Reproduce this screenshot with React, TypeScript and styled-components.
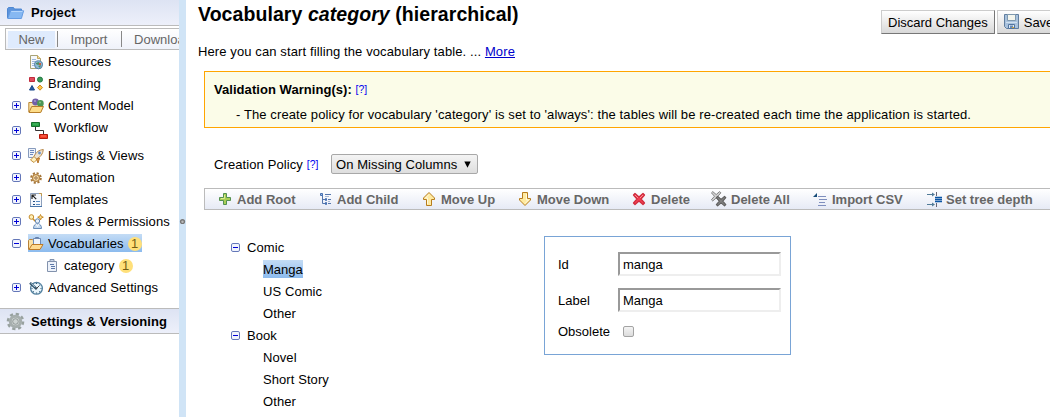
import React from "react";
import styled, { createGlobalStyle } from "styled-components";

const GlobalStyle = createGlobalStyle`
  * { box-sizing: border-box; }
  html, body { margin: 0; height: 100%; overflow: hidden; background: #fff; }
  body { font: 13px "Liberation Sans", Arial, sans-serif; color: #000; }
`;

const Page = styled.div`
  display: flex;
  width: 1050px;
  height: 417px;
  overflow: hidden;
  white-space: nowrap;
`;

/* ---------- sidebar ---------- */
const Sidebar = styled.aside`
  flex: 0 0 179px;
  overflow: hidden;
`;
const StackHeader = styled.div<{ $first?: boolean }>`
  display: flex;
  align-items: center;
  gap: 6px;
  height: 26px;
  padding: 0 0 0 6px;
  font-weight: bold;
  letter-spacing: 0.08px;
  border-top: ${(p) => (p.$first ? "0" : "1px solid #bbb")};
  border-bottom: 1px solid #bbb;
  background: linear-gradient(#dde3f3, #edf0fa);
`;
const Tabs = styled.div`
  display: flex;
  align-items: center;
  width: 220px;
  height: 22px;
  margin: 2px 0 0 5px;
  padding-left: 2px;
  border: 1px solid #bbb;
  color: #666;
  background: linear-gradient(#fff, #eff2fa);
`;
const Tab = styled.span<{ $active?: boolean; $width: number }>`
  flex: 0 0 ${(p) => p.$width}px;
  height: 17px;
  line-height: 17px;
  text-align: center;
  background: ${(p) => (p.$active ? "#dfebfd" : "transparent")};
`;
const TabRule = styled.i`
  width: 1px;
  height: 16px;
  margin: 0 1px 0 2px;
  background: #888;
`;
const Nav = styled.div`
  padding-top: 1px;
  height: 258px;
`;
const NavRow = styled.div<{ $tall?: boolean; $indent?: boolean }>`
  display: flex;
  align-items: ${(p) => (p.$tall ? "flex-start" : "center")};
  height: ${(p) => (p.$tall ? 28 : 22)}px;
  padding-left: ${(p) => (p.$indent ? 28 : 12)}px;
`;
const ToggleSlot = styled.span<{ $top?: number }>`
  flex: 0 0 16px;
  height: 9px;
  margin-top: ${(p) => p.$top ?? 0}px;
  margin-bottom: 1px;
  line-height: 0;
`;
const NavItem = styled.span<{ $selected?: boolean; $tall?: boolean }>`
  display: flex;
  align-items: ${(p) => (p.$tall ? "flex-start" : "center")};
  gap: ${(p) => (p.$tall ? 3 : 4)}px;
  height: ${(p) => (p.$tall ? 28 : 18)}px;
  margin-bottom: ${(p) => (p.$tall ? 0 : 2)}px;
  padding-top: ${(p) => (p.$tall ? 0 : 2)}px;
  background: ${(p) => (p.$selected ? "linear-gradient(#c4dcf5, #8cbbee)" : "none")};
`;
const NavText = styled.span<{ $tall?: boolean }>`
  line-height: ${(p) => (p.$tall ? 21 : 18)}px;
  letter-spacing: 0.1px;
`;
const Badge = styled.span`
  width: 14px;
  height: 14px;
  border-radius: 7px;
  line-height: 14px;
  text-align: center;
  color: #755d14;
  background: #ffe07a;
`;
const Splitter = styled.div`
  display: flex;
  align-items: center;
  flex: 0 0 7px;
  background: #d0e4f6;
  svg { margin-top: 26px; }
`;

/* ---------- main area ---------- */
const Main = styled.main`
  flex: 1;
  min-width: 0;
  overflow: hidden;
`;
const Heading = styled.div`
  display: flex;
  justify-content: space-between;
  height: 41px;
  padding-left: 12px;
`;
const Title = styled.h1`
  margin: 0;
  font-size: 19.5px;
  line-height: 29px;
  letter-spacing: 0.07px;
`;
const Actions = styled.div`
  display: flex;
  gap: 2px;
  flex: 0 0 169px;
  min-width: 0;
  padding-top: 10px;
`;
const Button = styled.button`
  display: flex;
  flex: none;
  align-items: center;
  gap: 4px;
  height: 24px;
  padding: 0 6px;
  border: 1px solid;
  border-color: #ccc #777 #777 #ccc;
  font: 13px "Liberation Sans", Arial, sans-serif;
  color: #000;
  background: linear-gradient(#fff, #d8d8d8);
`;
const Intro = styled.p`
  height: 30px;
  margin: 0;
  padding-left: 12px;
  line-height: 21px;
  letter-spacing: 0.11px;
`;
const More = styled.a`
  color: #0000cc;
  text-decoration: underline;
`;
const Warning = styled.section`
  width: 900px;
  height: 57px;
  margin-left: 18px;
  padding: 9px 9px 0;
  border: 1px solid #ffa500;
  background: #fbfce8;
`;
const WarningTitle = styled.div`
  font-weight: bold;
  line-height: 17px;
  letter-spacing: 0.05px;
`;
const WarningText = styled.div`
  padding: 8px 0 0 22px;
  line-height: 17px;
  letter-spacing: 0.108px;
`;
const Help = styled.sup`
  font-size: 10.4px;
  font-weight: normal;
  line-height: 0;
  vertical-align: 1px;
  color: #0000ee;
`;
const Policy = styled.div`
  display: flex;
  align-items: center;
  height: 60px;
  padding: 12px 0 0 28px;
`;
const PolicyLabel = styled.span`
  width: 117px;
  letter-spacing: 0.1px;
`;
const Select = styled.div`
  display: flex;
  align-items: center;
  justify-content: space-between;
  width: 147px;
  height: 20px;
  padding: 0 6px 0 4px;
  border: 1px solid #a8a8a8;
  border-radius: 2px;
  letter-spacing: 0.08px;
  background: linear-gradient(#f4f4f4, #dedede);
`;
const Toolbar = styled.div`
  display: flex;
  align-items: center;
  width: 900px;
  height: 22px;
  margin-left: 18px;
  padding-left: 12px;
  border: 1px solid #bbb;
  background: linear-gradient(#fff, #e6eaf5);
`;
const Tool = styled.span<{ $width: number }>`
  display: flex;
  flex: 0 0 ${(p) => p.$width}px;
  align-items: center;
  gap: 4px;
  font-weight: bold;
  color: #666;
`;
const Workspace = styled.div`
  display: flex;
  padding: 26px 0 0 45px;
`;
const Tree = styled.div`
  width: 313px;
  padding-top: 1px;
`;
const TreeRow = styled.div<{ $leaf?: boolean }>`
  display: flex;
  align-items: center;
  gap: 7px;
  height: 22px;
  padding-left: ${(p) => (p.$leaf ? 32 : 0)}px;
  svg { margin-bottom: 1px; }
`;
const TreeText = styled.span<{ $selected?: boolean }>`
  height: 18px;
  margin-bottom: 2px;
  line-height: 20px;
  letter-spacing: ${(p) => (p.$selected ? 0 : 0.08)}px;
  background: ${(p) => (p.$selected ? "linear-gradient(#c4dcf5, #8cbbee)" : "none")};
`;
const Form = styled.div`
  width: 247px;
  height: 119px;
  padding: 15px 9px 0 13px;
  border: 1px solid #79a4d6;
`;
const Field = styled.label<{ $last?: boolean }>`
  display: flex;
  align-items: center;
  height: ${(p) => (p.$last ? 15 : 24)}px;
  margin-bottom: 12px;
`;
const FieldName = styled.span`
  flex: 0 0 60px;
`;
const Input = styled.input`
  width: 163px;
  height: 24px;
  padding: 1px 3px;
  border: 2px solid;
  border-color: #999 #eee #eee #999;
  outline: 0;
  font: 13px "Liberation Sans", Arial, sans-serif;
  background: #fff;
`;
const Checkbox = styled.span`
  width: 11px;
  height: 11px;
  margin-left: 5px;
  border: 1px solid #a3a3a3;
  border-radius: 2px;
  background: linear-gradient(#f4f4f4, #dcdcdc);
`;

/* ---------- icons ---------- */
const Icon = styled.svg`
  flex: none;
  fill: none;
`;
const Svg = ({ w = 16, h = 16, children }: { w?: number; h?: number; children: React.ReactNode }) => (
  <Icon width={w} height={h} viewBox={`0 0 ${w} ${h}`}>
    {children}
  </Icon>
);

const Toggle = ({ open }: { open?: boolean }) => (
  <Svg w={9} h={9}>
    <rect x=".5" y=".5" width="8" height="8" rx="1.4" fill="#f1f4fd" stroke="#6477b8" />
    <path d={open ? "M2 4.5h5" : "M2 4.5h5M4.5 2v5"} stroke="#0000d8" />
  </Svg>
);

const ProjectIcon = () => (
  <Svg w={19} h={16}>
    <path d="M1.5 13V3.5l1-1h5l1 1.5h7v3" fill="#5b93dc" stroke="#4f88d2" />
    <path d="M1.7 13.5 4.6 5.8h13l-2.2 7.7z" fill="#86b8f2" stroke="#659ce2" />
    <path d="M5.2 6.5h11.4" stroke="#b5d6fb" />
  </Svg>
);
const GearIcon = () => (
  <Svg w={19} h={19}>
    <circle cx="9.5" cy="9.5" r="7.5" stroke="#98a19f" strokeWidth="2.6" strokeDasharray="3.2 2.69" />
    <circle cx="9.5" cy="9.5" r="5.2" fill="#d5dad9" stroke="#a6aead" strokeWidth="3" />
    <circle cx="9.5" cy="9.5" r="2.8" fill="#cdd3d2" stroke="#8f9796" />
  </Svg>
);
const ResourcesIcon = () => (
  <Svg>
    <path d="M2.5 1.5h7l3 3v10h-10z" fill="#f5f8fc" stroke="#a8a377" />
    <path d="M9.5 1.5v3h3" fill="#f6dfa0" stroke="#c4a65c" />
    <path d="M4 5.5h4M4 7.5h4M4 9.5h2M4 11.5h2" stroke="#9db9dc" />
    <circle cx="10.5" cy="10.8" r="4" fill="#8ebbd7" stroke="#547ea5" />
    <path d="m8 9 3-1 1 2-2 1-2-1zM10 12l3-1-1 3z" fill="#4f8c62" />
    <path d="M11 9h2v2h-2z" fill="#c65d48" />
  </Svg>
);
const BrandingIcon = () => (
  <Svg>
    <path d="M1.5 1.5h5v4h-5z" fill="#e04c5c" stroke="#c02a3c" />
    <circle cx="12" cy="3.6" r="2.5" fill="#3b9b5a" stroke="#237943" />
    <path d="M4 9.5 6.5 14h-5z" fill="#235aa3" stroke="#17468a" />
    <path d="m12 9 2.5 2.6L12 14.2l-2.5-2.6z" fill="#ffc84a" stroke="#cf8a20" />
  </Svg>
);
const ContentIcon = () => (
  <Svg>
    <path d="M.8 14V4.5h4l1 1.5h7v8" fill="#fbe5a8" stroke="#b98534" />
    <circle cx="7.5" cy="4" r="3.4" fill="#7060a8" />
    <circle cx="12.4" cy="5.4" r="3.3" fill="#4c9654" />
    <circle cx="7" cy="3" r="1" fill="#a79bd0" />
    <circle cx="12" cy="4.5" r="1" fill="#87c18a" />
    <path d="m1 14.5 2.7-6h11.8l-2.8 6z" fill="#fddc88" stroke="#b77e2b" />
  </Svg>
);
const WorkflowIcon = () => (
  <Svg w={23} h={26}>
    <path d="M7.5 10v3.5h8V17" stroke="#333" />
    <path d="M3.5 5.5h8v4h-8z" fill="#27a347" stroke="#176e2c" />
    <path d="M11.5 17.5h8v4h-8z" fill="#f03c24" stroke="#b51a0d" />
    <path d="M5 7h5" stroke="#4fb966" />
    <path d="M13 19h5" stroke="#ff6f5c" />
  </Svg>
);
const ListingsIcon = () => (
  <Svg>
    <path d="M.5.5h7v9h-7z" fill="#eef3fb" stroke="#879bbd" />
    <path d="M2 2.5h4M2 4.5h4M2 6.5h3" stroke="#6d89bd" />
    <path d="m2.5 12 4-4 3 3-3.5 3.5z" fill="#fff3c1" stroke="#c69242" />
    <path d="M6 8.5C8 4 11 2 15.3 1.5 15 6 12.5 9 8.5 11z" fill="#ebe2d2" stroke="#b98a4b" />
    <circle cx="11.5" cy="5" r="1.4" fill="#6a91c7" />
    <path d="m8.5 11 3-1-1.5 5z" fill="#e8a24c" stroke="#b7762c" />
  </Svg>
);
const AutomationIcon = () => (
  <Svg>
    <circle cx="8" cy="8" r="4.8" stroke="#a57639" strokeWidth="2" strokeDasharray="2.1 1.67" />
    <circle cx="8" cy="8" r="3.4" fill="#f8dfab" stroke="#b58648" strokeWidth="1.3" />
    <circle cx="8" cy="8" r="1.2" fill="#fff" stroke="#8f5e29" />
  </Svg>
);
const TemplatesIcon = () => (
  <Svg>
    <path d="M2.5 1.5h11v13h-11z" fill="#f5f8fd" stroke="#8da0bc" />
    <path d="M11 1.5h2.5V4" stroke="#c59b4c" />
    <path d="M4 7V3h4M4.2 3.2l4 4" stroke="#222" strokeWidth="1.2" />
    <path d="M5 9.5h2M5 12.5h2" stroke="#234d82" />
    <path d="M8 9.5h4M8 12.5h4" stroke="#5c8dc5" />
    <path d="M2 14.5h12" stroke="#4875aa" />
  </Svg>
);
const RolesIcon = () => (
  <Svg>
    <circle cx="3.4" cy="3" r="2.3" fill="#fff1b9" stroke="#c58b2b" />
    <path d="m4.8 4.8 3 3" stroke="#c58b2b" strokeWidth="1.4" />
    <path d="m12.5.5.8 1.9 2 .8-2 .8-.8 2-.8-2-2-.8 2-.8z" fill="#ffe090" stroke="#c58b2b" />
    <circle cx="9.5" cy="7" r="2.2" fill="#e7f0f9" stroke="#6589b6" />
    <path d="M5.5 14.5c0-3 1.5-4.8 4-4.8s4 1.8 4 4.8z" fill="#c4d9ee" stroke="#6589b6" />
    <path d="m8 10 1.5 2.5L11 10" stroke="#fff" />
  </Svg>
);
const VocabularyIcon = () => (
  <Svg>
    <path d="M.5 13.5V4.5l1-1h3l1 1.2h7v8" fill="#fbe2a6" stroke="#b88138" />
    <path d="M5.5 2.5h7v7h-7z" fill="#eef4fc" stroke="#6f8cb7" />
    <path d="M7.5 2.5v-1h3v1" stroke="#637fa9" />
    <path d="m1 13.5 3-5h11l-3 5z" fill="#ffdb91" stroke="#bd7b28" />
  </Svg>
);
const ClipboardIcon = () => (
  <Svg>
    <path d="M3.5 3.5h9v10h-9z" fill="#edf2fa" stroke="#8292ad" />
    <path d="M6 3.5v-2h4v2z" fill="#c9d4e7" stroke="#8292ad" />
    <path d="M6 6.5h4M7 8.5h4M7 10.5h4" stroke="#5d78a8" />
  </Svg>
);
const AdvancedIcon = () => (
  <Svg>
    <circle cx="8.5" cy="8.3" r="5.9" fill="#eaf6fc" stroke="#517f9e" strokeWidth="1.3" />
    <path d="M8.5 3v1M8.5 12.5v1M3.5 8.5h1M12.5 8.5h1M12 4.8l-.7.7M5 12l.7-.7M12 12l-.7-.7" stroke="#335e7d" strokeWidth="1.2" />
    <path d="m2 2.8 6.8 6.4" stroke="#2e5068" strokeWidth="2.4" />
    <path d="m3 3.2 4 4" stroke="#b6d5e5" />
    <path d="m8 9 3-3" stroke="#444" />
  </Svg>
);
const SaveIcon = () => (
  <Svg>
    <path d="M.5.5h14v14h-12l-2-2z" fill="#a9c2dd" stroke="#617e9f" />
    <path d="M3.5.5h8v6h-8z" fill="#f4f5ed" stroke="#7f99af" />
    <path d="M2 8.5h11" stroke="#d0e0ef" />
    <path d="M4.5 10.5h6v4h-6z" fill="#dce8f5" stroke="#53759f" />
    <path d="M6 11.5h3V14H6z" fill="#698cb7" />
    <path d="M8 13h2v1H8z" fill="#d8a733" />
  </Svg>
);
const PlusIcon = () => (
  <Svg>
    <path d="M6.5 2.5h3v4h4v3h-4v4h-3v-4h-4v-3h4z" fill="#a8ce56" stroke="#549151" />
    <path d="M7.5 4v3.5H4" stroke="#dbeb91" />
  </Svg>
);
const ChildIcon = () => (
  <Svg>
    <path d="M5.5 4v8.5H9M5.5 8.5H9M8 3.5h6M11 8.5h3M11 12.5h3" stroke="#5476ad" />
    <path d="M3.5 2.5h2v2h-2zM8.5 7.5h1v2h-1zM8.5 11.5h1v2h-1z" fill="#9cbde8" stroke="#4770b1" />
    <path d="M8 5.5h4M11 10.5h2" stroke="#a9b8d3" />
  </Svg>
);
const ArrowIcon = ({ down }: { down?: boolean }) => (
  <Svg>
    <g transform={down ? "rotate(180 8 8)" : undefined}>
      <path d="m8 1.5 5.5 5.5v1.5h-3v6h-5v-6h-3V7z" fill="#ffeaa0" stroke="#b77c1d" />
      <path d="M8 3.5 4.5 7h2v6" stroke="#fff9dc" />
    </g>
  </Svg>
);
const crossPath = "M4 2.5 8 6l4-3.5L13.5 4 10 8l3.5 4-1.5 1.5L8 10l-4 3.5L2.5 12 6 8 2.5 4z";
const DeleteIcon = () => (
  <Svg>
    <path d={crossPath} fill="#f23f52" stroke="#d02c3e" strokeWidth="1.3" strokeLinejoin="round" />
    <path d="m4 4 3 3M9 7l3-3" stroke="#ff8b91" />
  </Svg>
);
const DeleteAllIcon = () => (
  <Svg>
    <g transform="translate(-1.7 -1.6) scale(.86)">
      <path d={crossPath} fill="#d0d0d0" stroke="#777" strokeLinejoin="round" />
    </g>
    <g transform="translate(3.2 3.2) scale(.86)">
      <path d={crossPath} fill="#808080" stroke="#606060" strokeWidth="1.3" strokeLinejoin="round" />
    </g>
  </Svg>
);
const ImportIcon = () => (
  <Svg>
    <path d="M1 6h4V2z" fill="#164b78" />
    <path d="M6 5.5h8M7 8.5h8M7 11.5h6M6 14.5h8" stroke="#7f8fbe" />
  </Svg>
);
const DepthIcon = () => (
  <Svg>
    <path d="M1 3.5h7M1 13.5h7" stroke="#527b98" />
    <path d="m6 1.5 3 2-3 2zM6 11.5l3 2-3 2z" fill="#527b98" />
    <path d="M10.5 1v4M10.5 12v4" stroke="#667" />
    <path d="M9 6.5h7M9 8.5h7M9 10.5h7" stroke="#0b55a4" strokeWidth="1.3" />
  </Svg>
);

/* ---------- data ---------- */
const navItems = [
  { label: "Resources", Glyph: ResourcesIcon, leaf: true },
  { label: "Branding", Glyph: BrandingIcon, leaf: true },
  { label: "Content Model", Glyph: ContentIcon },
  { label: "Workflow", Glyph: WorkflowIcon, tall: true },
  { label: "Listings & Views", Glyph: ListingsIcon },
  { label: "Automation", Glyph: AutomationIcon },
  { label: "Templates", Glyph: TemplatesIcon },
  { label: "Roles & Permissions", Glyph: RolesIcon },
  { label: "Vocabularies", Glyph: VocabularyIcon, open: true, selected: true, badge: 1 },
  { label: "category", Glyph: ClipboardIcon, leaf: true, indent: true, badge: 1 },
  { label: "Advanced Settings", Glyph: AdvancedIcon },
];
const tools = [
  { label: "Add Root", icon: <PlusIcon />, width: 100 },
  { label: "Add Child", icon: <ChildIcon />, width: 104 },
  { label: "Move Up", icon: <ArrowIcon />, width: 96 },
  { label: "Move Down", icon: <ArrowIcon down />, width: 114 },
  { label: "Delete", icon: <DeleteIcon />, width: 80 },
  { label: "Delete All", icon: <DeleteAllIcon />, width: 101 },
  { label: "Import CSV", icon: <ImportIcon />, width: 114 },
  { label: "Set tree depth", icon: <DepthIcon />, width: 120 },
];
const terms = [
  { label: "Comic", children: ["Manga", "US Comic", "Other"] },
  { label: "Book", children: ["Novel", "Short Story", "Other"] },
];

export default function App() {
  return (
    <>
      <GlobalStyle />
      <Page>
        <Sidebar>
          <StackHeader $first><ProjectIcon />Project</StackHeader>
          <Tabs>
            <Tab $active $width={47}>New</Tab><TabRule />
            <Tab $width={60}>Import</Tab><TabRule />
            <Tab $width={80}>Download</Tab>
          </Tabs>
          <Nav>
            {navItems.map(({ label, Glyph, leaf, tall, open, selected, indent, badge }) => (
              <NavRow key={label} $tall={tall} $indent={indent}>
                <ToggleSlot $top={tall ? 9 : 0}>{!leaf && <Toggle open={open} />}</ToggleSlot>
                <NavItem $selected={selected} $tall={tall}>
                  <Glyph />
                  <NavText $tall={tall}>{label}</NavText>
                  {badge && <Badge>{badge}</Badge>}
                </NavItem>
              </NavRow>
            ))}
          </Nav>
          <StackHeader><GearIcon />Settings &amp; Versioning</StackHeader>
        </Sidebar>
        <Splitter>
          <Svg w={7} h={7}>
            <circle cx="3.5" cy="3.5" r="2.6" fill="#777" />
            <circle cx="3.5" cy="3.7" r="1.2" fill="#bbb" />
          </Svg>
        </Splitter>
        <Main>
          <Heading>
            <Title>Vocabulary <em>category</em> (hierarchical)</Title>
            <Actions>
              <Button>Discard Changes</Button>
              <Button><SaveIcon />Save</Button>
            </Actions>
          </Heading>
          <Intro>Here you can start filling the vocabulary table. ... <More>More</More></Intro>
          <Warning>
            <WarningTitle>Validation Warning(s): <Help>[?]</Help></WarningTitle>
            <WarningText>- The create policy for vocabulary 'category' is set to 'always': the tables will be re-created each time the application is started.</WarningText>
          </Warning>
          <Policy>
            <PolicyLabel>Creation Policy <Help>[?]</Help></PolicyLabel>
            <Select>
              On Missing Columns
              <Svg w={7} h={7}><path d="M.3.5h6.4L3.5 6.8z" fill="#000" /></Svg>
            </Select>
          </Policy>
          <Toolbar>
            {tools.map((t) => <Tool key={t.label} $width={t.width}>{t.icon}{t.label}</Tool>)}
          </Toolbar>
          <Workspace>
            <Tree>
              {terms.map((term) => (
                <React.Fragment key={term.label}>
                  <TreeRow><Toggle open /><TreeText>{term.label}</TreeText></TreeRow>
                  {term.children.map((name) => (
                    <TreeRow key={name} $leaf><TreeText $selected={name === "Manga"}>{name}</TreeText></TreeRow>
                  ))}
                </React.Fragment>
              ))}
            </Tree>
            <Form>
              <Field><FieldName>Id</FieldName><Input defaultValue="manga" /></Field>
              <Field><FieldName>Label</FieldName><Input defaultValue="Manga" /></Field>
              <Field $last><FieldName>Obsolete</FieldName><Checkbox /></Field>
            </Form>
          </Workspace>
        </Main>
      </Page>
    </>
  );
}
